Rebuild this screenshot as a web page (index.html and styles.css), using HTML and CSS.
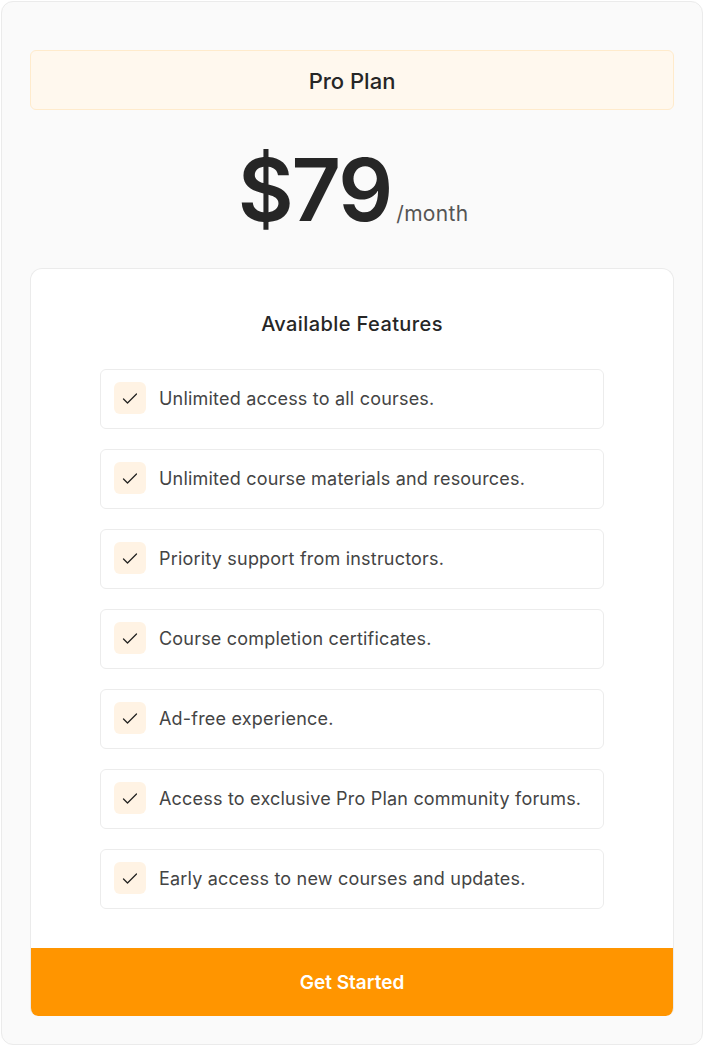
FILE: index.html
```html
<!DOCTYPE html>
<html lang="en">
<head>
<meta charset="utf-8">
<title>Pro Plan</title>
<link rel="stylesheet" href="styles.css">
</head>
<body>
<div class="plan">
  <div class="plan-name">Pro Plan</div>
  <div class="price">
    <span class="amount">$79</span><span class="period">/month</span>
  </div>
  <div class="features">
    <div class="features-body">
      <h2 class="features-title">Available Features</h2>
      <ul class="feature-list">
        <li class="feature"><span class="check"><svg viewBox="0 0 16 16" width="16" height="16"><path d="M1.5 9 L5.5 13 L14.5 4" fill="none" stroke="#222" stroke-width="1.3" stroke-linecap="round" stroke-linejoin="round"/></svg></span><span class="feature-text">Unlimited access to all courses.</span></li>
        <li class="feature"><span class="check"><svg viewBox="0 0 16 16" width="16" height="16"><path d="M1.5 9 L5.5 13 L14.5 4" fill="none" stroke="#222" stroke-width="1.3" stroke-linecap="round" stroke-linejoin="round"/></svg></span><span class="feature-text">Unlimited course materials and resources.</span></li>
        <li class="feature"><span class="check"><svg viewBox="0 0 16 16" width="16" height="16"><path d="M1.5 9 L5.5 13 L14.5 4" fill="none" stroke="#222" stroke-width="1.3" stroke-linecap="round" stroke-linejoin="round"/></svg></span><span class="feature-text">Priority support from instructors.</span></li>
        <li class="feature"><span class="check"><svg viewBox="0 0 16 16" width="16" height="16"><path d="M1.5 9 L5.5 13 L14.5 4" fill="none" stroke="#222" stroke-width="1.3" stroke-linecap="round" stroke-linejoin="round"/></svg></span><span class="feature-text">Course completion certificates.</span></li>
        <li class="feature"><span class="check"><svg viewBox="0 0 16 16" width="16" height="16"><path d="M1.5 9 L5.5 13 L14.5 4" fill="none" stroke="#222" stroke-width="1.3" stroke-linecap="round" stroke-linejoin="round"/></svg></span><span class="feature-text">Ad-free experience.</span></li>
        <li class="feature"><span class="check"><svg viewBox="0 0 16 16" width="16" height="16"><path d="M1.5 9 L5.5 13 L14.5 4" fill="none" stroke="#222" stroke-width="1.3" stroke-linecap="round" stroke-linejoin="round"/></svg></span><span class="feature-text">Access to exclusive Pro Plan community forums.</span></li>
        <li class="feature"><span class="check"><svg viewBox="0 0 16 16" width="16" height="16"><path d="M1.5 9 L5.5 13 L14.5 4" fill="none" stroke="#222" stroke-width="1.3" stroke-linecap="round" stroke-linejoin="round"/></svg></span><span class="feature-text">Early access to new courses and updates.</span></li>
      </ul>
    </div>
    <button class="cta">Get Started</button>
  </div>
</div>
</body>
</html>
```

FILE: styles.css
```css
* { box-sizing: border-box; }
html, body { margin: 0; padding: 0; background: #ffffff; }
body {
  font-family: Inter, "Noto Sans", "Liberation Sans", sans-serif;
  color: #262626;
  padding: 1px;
}
.plan {
  width: 702px;
  height: 1044px;
  background: #fafafa;
  border: 1px solid #ebebeb;
  border-radius: 12px;
  padding: 48px 28px 28px;
  display: flex;
  flex-direction: column;
}
.plan-name {
  height: 60px;
  background: #fff8ee;
  border: 1px solid #ffebcc;
  border-radius: 6px;
  display: flex;
  align-items: center;
  justify-content: center;
  padding-top: 2px;
  font-size: 22px;
  font-weight: 500;
  color: #262626;
}
.price {
  display: flex;
  justify-content: center;
  align-items: baseline;
  margin-top: 26px;
  height: 132px;
  padding-left: 2px;
}
.amount {
  font-size: 86px;
  font-weight: 600;
  line-height: 108px;
  letter-spacing: -2px;
  color: #262626;
}
.period {
  font-size: 21px;
  letter-spacing: 0.3px;
  color: #555;
  margin-left: 5px;
}
.features {
  flex: 1;
  background: #fff;
  border: 1px solid #ebebeb;
  border-bottom: 0;
  border-radius: 12px 12px 8px 8px;
  display: flex;
  flex-direction: column;
  overflow: hidden;
}
.features-body {
  flex: 1;
  padding: 41px 69px 0;
}
.features-title {
  margin: 0 0 31px;
  text-align: center;
  font-size: 20px;
  font-weight: 500;
  letter-spacing: 0.4px;
  line-height: 28px;
  color: #262626;
}
.feature-list {
  list-style: none;
  margin: 0;
  padding: 0;
  display: flex;
  flex-direction: column;
  gap: 20px;
}
.feature {
  height: 60px;
  border: 1px solid #ececec;
  border-radius: 6px;
  display: flex;
  align-items: center;
  padding: 0 13px 2px;
  gap: 13px;
}
.check {
  width: 32px;
  height: 32px;
  border-radius: 6px;
  background: #fff3e4;
  display: flex;
  align-items: center;
  justify-content: center;
  flex-shrink: 0;
}
.feature-text {
  font-size: 18px;
  letter-spacing: 0.2px;
  color: #444;
}
.cta {
  height: 68px;
  margin: 0 -1px;
  border: 0;
  background: #ff9500;
  color: #fff;
  font-family: inherit;
  font-size: 19px;
  font-weight: 600;
  border-radius: 0 0 8px 8px;
  cursor: pointer;
}
```
